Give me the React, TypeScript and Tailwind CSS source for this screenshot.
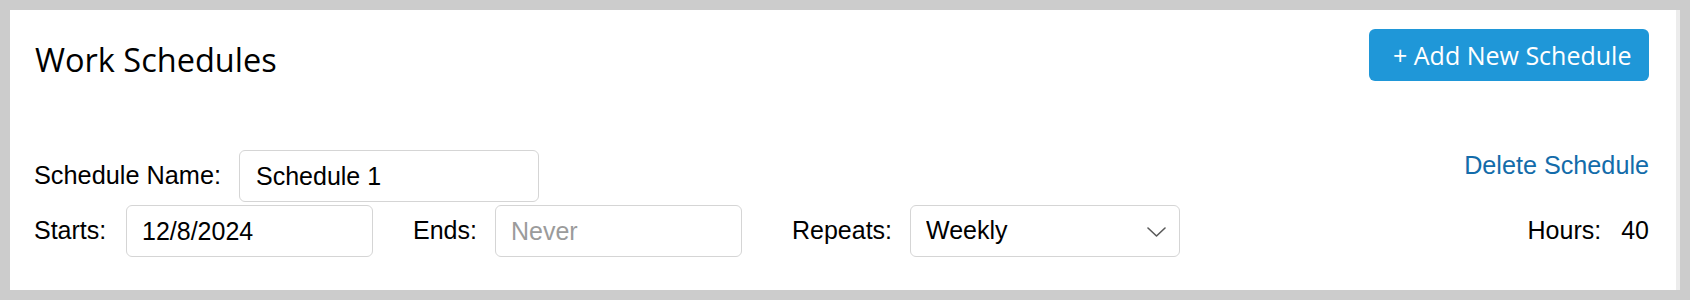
import React from "react";

const sans = { fontFamily: '"Liberation Sans", Arial, sans-serif' };

export default function App() {
  return (
    <div className="w-[1690px] h-[300px] bg-[#cccccc] p-[10px]">
      <div className="h-full bg-white border-r-[4px] border-[#ececec] pl-[24px] pr-[27px] pt-[19px] font-['Liberation_Sans',Arial,sans-serif] text-black">
        <div className="flex items-start justify-between">
          <h1 className="mt-[15px] ml-[1px] text-[32.5px] leading-[32px] font-normal font-['Open_Sans',sans-serif]">
            Work Schedules
          </h1>
          <button className="w-[280px] h-[52px] rounded-[6px] bg-[#1f97d8] text-white flex items-center pl-[24px] text-[25px] leading-none font-['Open_Sans',sans-serif]">
            + Add New Schedule
          </button>
        </div>

        <div className="mt-[69px] flex items-start">
          <div className="flex items-center">
            <label className="w-[205px] shrink-0 text-[25.3px]">Schedule Name:</label>
            <input
              readOnly
              value="Schedule 1"
              className="w-[300px] h-[52px] rounded-[6px] border border-[#d5d5d5] px-[16px] text-[25px] outline-none"
              style={sans}
            />
          </div>
          <a className="ml-auto mt-[3px] text-[25.2px] leading-none text-[#136caa] cursor-pointer">
            Delete Schedule
          </a>
        </div>

        <div className="mt-[3px] flex items-center">
          <label className="w-[92px] shrink-0 text-[25px]">Starts:</label>
          <input
            readOnly
            value="12/8/2024"
            className="w-[247px] h-[52px] rounded-[6px] border border-[#d5d5d5] px-[15px] text-[25px] outline-none"
            style={sans}
          />
          <label className="ml-[40px] w-[82px] shrink-0 text-[25px]">Ends:</label>
          <input
            readOnly
            placeholder="Never"
            className="w-[247px] h-[52px] rounded-[6px] border border-[#d5d5d5] px-[15px] text-[25px] outline-none placeholder:text-[#9b9b9b]"
            style={sans}
          />
          <label className="ml-[50px] w-[118px] shrink-0 text-[25px]">Repeats:</label>
          <div className="relative w-[270px] h-[52px]">
            <select
              defaultValue="Weekly"
              className="appearance-none w-full h-full rounded-[6px] border border-[#d5d5d5] bg-white px-[15px] text-[25px] text-black outline-none"
              style={sans}
            >
              <option>Weekly</option>
              <option>Daily</option>
              <option>Monthly</option>
            </select>
            <svg
              className="pointer-events-none absolute right-[14px] top-[22px]"
              width="19"
              height="10"
              viewBox="0 0 19 10"
              fill="none"
            >
              <path d="M1 1 L9.5 9 L18 1" stroke="#595959" strokeWidth="1.6" strokeLinecap="round" strokeLinejoin="round" />
            </svg>
          </div>
          <div className="ml-auto flex items-center text-[25px]">
            <span>Hours:</span>
            <span className="ml-[20px]">40</span>
          </div>
        </div>
      </div>
    </div>
  );
}
